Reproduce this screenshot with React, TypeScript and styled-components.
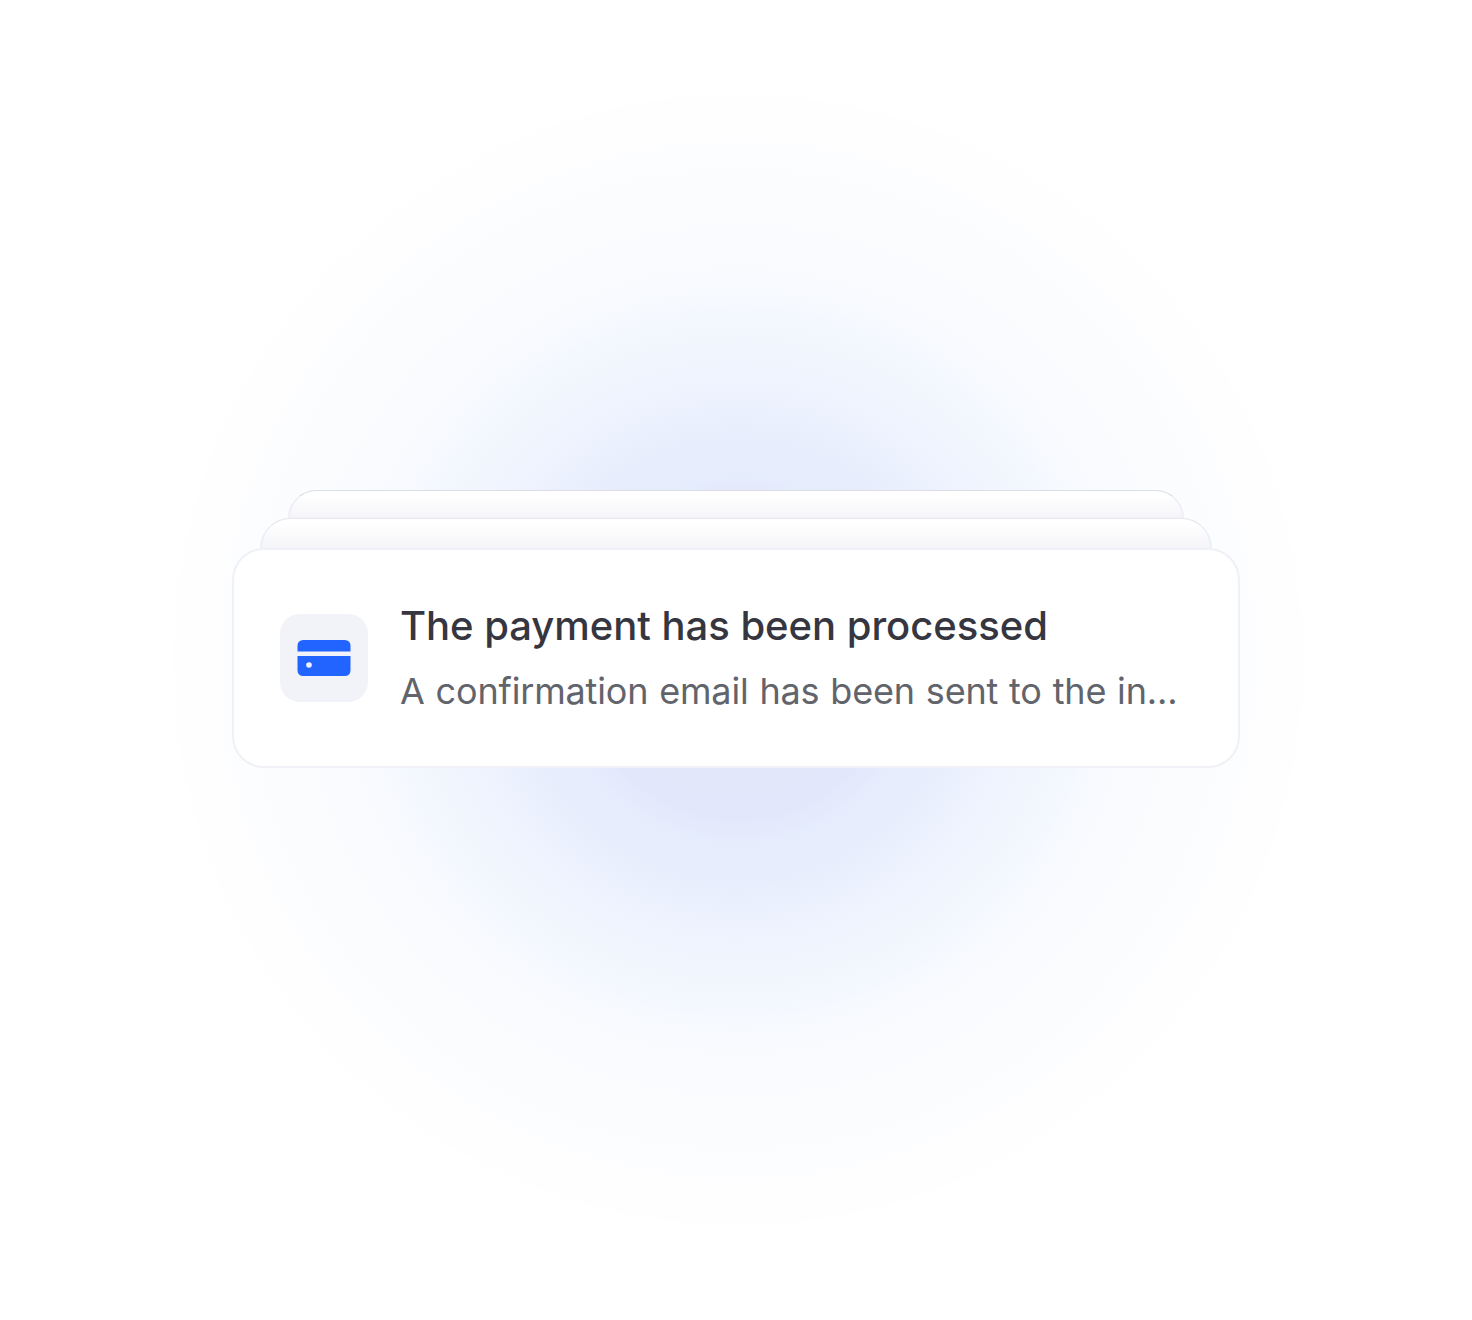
import React from 'react';
import styled, { createGlobalStyle } from 'styled-components';

const GlobalStyle = createGlobalStyle`
  * { box-sizing: border-box; }
  body { margin: 0; background: #ffffff; }
`;

const Stage = styled.main`
  display: flex;
  flex-direction: column;
  align-items: center;
  height: 1320px;
  padding-top: 490px;
  overflow: hidden;
  font-family: Inter, 'Liberation Sans', sans-serif;
  background: radial-gradient(
    circle 580px at 738px 660px,
    #e2e6f9 0,
    #e2e7fa 130px,
    #e3e7fb 158px,
    #e5ecfc 182px,
    #e8edfd 215px,
    #ebf0fe 245px,
    #eff4fe 290px,
    #f3f8fe 340px,
    #f6f9fe 362px,
    #f9fafe 392px,
    #fbfcfe 440px,
    #fcfdff 512px,
    #fefeff 522px,
    #fefefe 562px,
    #ffffff 568px
  );
`;

const StackedCard = styled.div<{ $width: number; $height: number; $line: string }>`
  width: ${(p) => p.$width}px;
  height: ${(p) => p.$height}px;
  border: 2px solid #eceff7;
  border-top: 1px solid ${(p) => p.$line};
  border-bottom: 0;
  border-radius: 30px 30px 0 0;
  background: linear-gradient(#ffffff 15%, #f5f5f9 100%);
`;

const NotificationCard = styled.article`
  display: flex;
  align-items: center;
  gap: 32px;
  width: 1008px;
  height: 220px;
  padding: 0 46px;
  border: 2px solid #eff1f6;
  border-radius: 32px;
  background: #ffffff;
`;

const IconTile = styled.div`
  display: flex;
  align-items: center;
  justify-content: center;
  flex: none;
  width: 88px;
  height: 88px;
  border-radius: 20px;
  background: #f2f3f8;
`;

const Message = styled.div`
  flex: 1;
  min-width: 0;
  padding-top: 1px;
`;

const Title = styled.h1`
  margin: 0;
  font-size: 40px;
  font-weight: 500;
  font-optical-sizing: none;
  letter-spacing: -0.03px;
  line-height: 65px;
  color: #363640;
`;

const Detail = styled.p`
  margin: 0;
  font-size: 36px;
  font-optical-sizing: none;
  letter-spacing: -0.16px;
  word-spacing: 0.9px;
  line-height: 66px;
  white-space: nowrap;
  color: #62646c;
`;

const CardIcon = () => (
  <svg width="54" height="36" viewBox="0 0 54 36" fill="#2264ff" aria-hidden="true">
    <path d="M6 0h42a5.500 5.500 0 0 1 5.500 5.500V11.500H.5v-6A5.500 5.500 0 0 1 6 0z" />
    <path d="M.5 16h53v14.500A5.500 5.500 0 0 1 48 36H6a5.500 5.500 0 0 1-5.500-5.500z" />
    <circle cx="12" cy="25" r="2.800" fill="#f2f3f8" />
  </svg>
);

export default function App() {
  return (
    <>
      <GlobalStyle />
      <Stage>
        <StackedCard $width={896} $height={28} $line="#dcdee6" />
        <StackedCard $width={952} $height={30} $line="#e6e7ee" />
        <NotificationCard>
          <IconTile>
            <CardIcon />
          </IconTile>
          <Message>
            <Title>The payment has been processed</Title>
            <Detail>A confirmation email has been sent to the in...</Detail>
          </Message>
        </NotificationCard>
      </Stage>
    </>
  );
}
